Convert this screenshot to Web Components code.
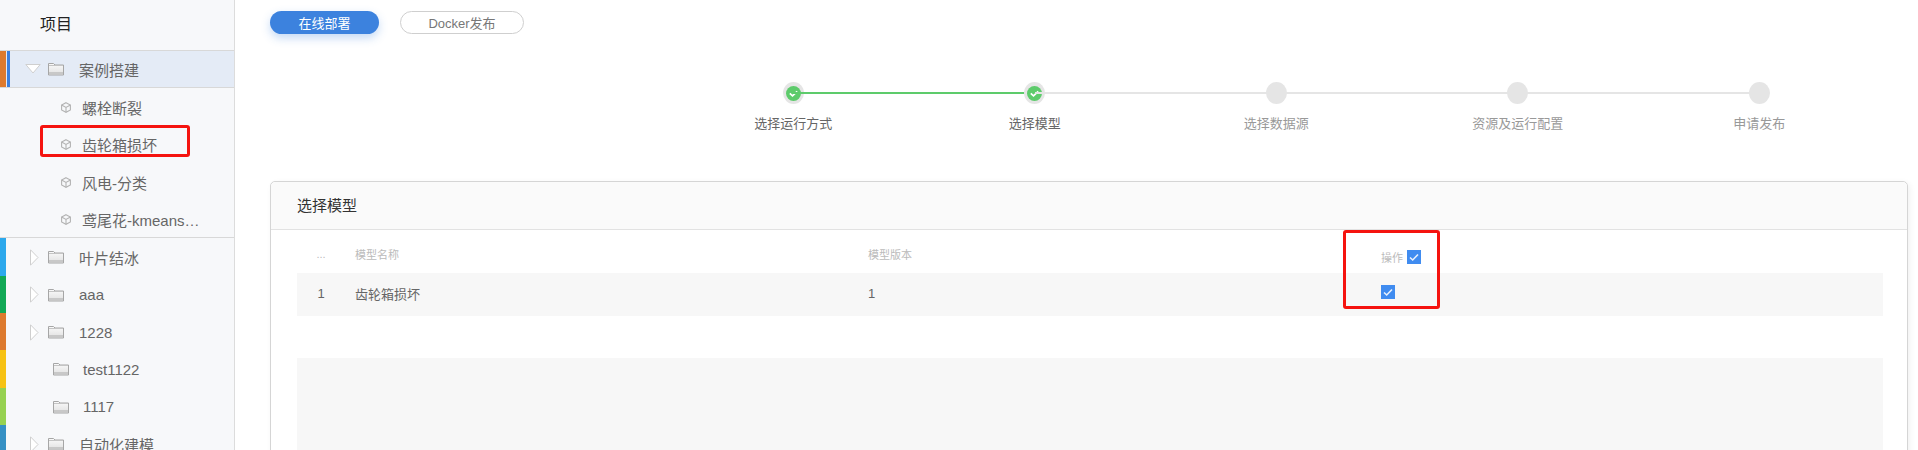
<!DOCTYPE html>
<html lang="zh">
<head>
<meta charset="utf-8">
<title>选择模型</title>
<style>
  html, body { margin: 0; height: 450px; overflow: hidden; background: #fff; }
  body { font-family: "Liberation Sans", "Noto Sans CJK SC", sans-serif; display: flex; }
</style>
</head>
<body>
<template id="folder-tpl">
  <svg width="16" height="14" viewBox="0 0 16 14"><defs><linearGradient id="fg" x1="0" y1="0" x2="0" y2="1"><stop offset="0" stop-color="#fafafa"/><stop offset="1" stop-color="#e0e0e0"/></linearGradient></defs><path d="M.5 1.500h5l1.500 1.500h8.500v10H.5z" fill="url(#fg)" stroke="#a6a6a6"/><path d="M1 10h14v2.500H1z" fill="#c8c8c8"/><path d="M1 3.500h14" stroke="#c4c4c4"/></svg>
</template>

<app-sidebar>
  <tree-row stripe="#dd7a2e" accent open active label="案例搭建"></tree-row>
  <tree-leaf label="螺栓断裂"></tree-leaf>
  <tree-leaf label="齿轮箱损坏"></tree-leaf>
  <tree-leaf label="风电-分类"></tree-leaf>
  <tree-leaf label="鸢尾花-kmeans…" last></tree-leaf>
  <tree-row stripe="#2ca8ec" label="叶片结冰"></tree-row>
  <tree-row stripe="#12a855" label="aaa"></tree-row>
  <tree-row stripe="#dd7a2e" label="1228"></tree-row>
  <tree-row stripe="#f7c213" plain label="test1122"></tree-row>
  <tree-row stripe="#96d151" plain label="1117"></tree-row>
  <tree-row stripe="#3590c4" label="自动化建模"></tree-row>
</app-sidebar>

<app-main>
  <pill-tabs></pill-tabs>
  <step-bar></step-bar>
  <model-card></model-card>
</app-main>

<script>
const FOLDER = document.getElementById('folder-tpl').innerHTML;

class AppSidebar extends HTMLElement {
  constructor() {
    super();
    this.attachShadow({ mode: 'open' });
    this.shadowRoot.innerHTML = `
      <style>
        :host { display: block; position: relative; flex: none; width: 234px; height: 450px; overflow: hidden;
          box-sizing: content-box; background: #f7f8fa; border-right: 1px solid #dcdcdc; }
        header { height: 50px; box-sizing: border-box; padding: 15px 0 0 40px; font-size: 16px; line-height: 20px; color: #222; }
        .mark { position: absolute; left: 40px; top: 125px; width: 150px; height: 32px; box-sizing: border-box;
          border: 3px solid #f5130f; border-radius: 3px; }
      </style>
      <header>项目</header>
      <slot></slot>
      <div class="mark"></div>`;
  }
}

class TreeRow extends HTMLElement {
  constructor() {
    super();
    this.attachShadow({ mode: 'open' });
  }
  connectedCallback() {
    const open = this.hasAttribute('open');
    const plain = this.hasAttribute('plain');
    const arrow = open
      ? '<svg width="16" height="10" viewBox="0 0 16 10"><path d="M.8.500h14.400L8 9z" fill="#fff" stroke="#cfcfcf"/></svg>'
      : '<svg width="9" height="17" viewBox="0 0 9 17"><path d="M.5.800v15.400L8 8.500z" fill="#fff" stroke="#cfcfcf"/></svg>';
    this.shadowRoot.innerHTML = `
      <style>
        :host { display: flex; align-items: stretch; height: 37.330px; font-size: 15px; color: #666; }
        :host([active]) { background: #e4ebf6; height: 38px; box-sizing: border-box; border-top: 1px solid #d8d8d8; border-bottom: 1px solid #d8d8d8; }
        .stripe { flex: none; width: 6px; background: ${this.getAttribute('stripe')}; }
        .accent { flex: none; width: 3px; margin-left: 1px; background: #3c7fdc; }
        .body { display: flex; align-items: center; min-width: 0; white-space: nowrap; padding-top: 1px; }
        :host([active]) .body { padding-top: 0; }
        .arrow { flex: none; display: flex; justify-content: center; width: 16px; margin-left: 20px; }
        .folder { flex: none; display: flex; }
        .folder.after { margin-left: 6px; }
        .plain { margin-left: 47px; }
        .label { margin-left: 15px; }
        .plain + .label { margin-left: 14px; }
        :host([accent]) .arrow { margin-left: 15px; }
        :host([accent]) .folder.after { margin-left: 7px; }
      </style>
      <div class="stripe"></div>
      ${this.hasAttribute('accent') ? '<div class="accent"></div>' : ''}
      <div class="body">
        ${plain ? '' : `<span class="arrow">${arrow}</span>`}
        <span class="folder ${plain ? 'plain' : 'after'}">${FOLDER}</span>
        <span class="label">${this.getAttribute('label')}</span>
      </div>`;
  }
}

class TreeLeaf extends HTMLElement {
  constructor() {
    super();
    this.attachShadow({ mode: 'open' });
  }
  connectedCallback() {
    this.shadowRoot.innerHTML = `
      <style>
        :host { display: flex; align-items: center; height: 37.330px; box-sizing: border-box; padding: 2px 0 0 61px; font-size: 15px; color: #666; white-space: nowrap; }
        :host([last]) { box-sizing: content-box; height: 35.330px; border-bottom: 1px solid #d8d8d8; }
        svg { flex: none; margin-right: 11px; }
      </style>
      <svg width="10" height="11" viewBox="0 0 10 11" fill="none" stroke="#b3b3b3" stroke-width="1.100"><path d="M5 .7 9.400 3v5L5 10.300.6 8V3z"/><path d="M.6 3 5 5.400 9.400 3M5 5.400v4.900"/></svg>
      <span>${this.getAttribute('label')}</span>`;
  }
}

class AppMain extends HTMLElement {
  constructor() {
    super();
    this.attachShadow({ mode: 'open' });
    this.shadowRoot.innerHTML = `
      <style>
        :host { display: flex; flex-direction: column; flex: 1; min-width: 0; height: 450px; box-sizing: border-box;
          padding: 11px 10px 0 35px; overflow: hidden; }
      </style>
      <slot></slot>`;
  }
}

class PillTabs extends HTMLElement {
  constructor() {
    super();
    this.attachShadow({ mode: 'open' });
    this.shadowRoot.innerHTML = `
      <style>
        :host { display: flex; gap: 21px; height: 23px; font-size: 13px; }
        span { display: flex; align-items: center; justify-content: center; height: 23px; box-sizing: border-box; border-radius: 12px; }
        .on { width: 109px; background: #3c82de; color: #fff; box-shadow: 0 4px 10px rgba(60,130,222,.3); }
        .off { width: 124px; border: 1px solid #cfcfcf; color: #777; }
      </style>
      <span class="on">在线部署</span>
      <span class="off">Docker发布</span>`;
  }
}

class StepBar extends HTMLElement {
  constructor() {
    super();
    this.attachShadow({ mode: 'open' });
    const steps = [['选择运行方式', 1], ['选择模型', 1], ['选择数据源', 0], ['资源及运行配置', 0], ['申请发布', 0]];
    const check = '<svg width="15" height="15" viewBox="0 0 15 15"><circle cx="7.500" cy="7.500" r="7.500" fill="#5dcb6b"/><path d="M3.800 7.400 6.500 9.900 11.200 5.300" fill="none" stroke="#fff" stroke-width="1.700"/></svg>';
    this.shadowRoot.innerHTML = `
      <style>
        :host { display: flex; height: 99px; margin: 48px 28px 0 auto; width: 1207.500px; flex: none; }
        .step { position: relative; flex: 1; display: flex; flex-direction: column; align-items: center; }
        .step + .step::before { content: ""; position: absolute; top: 10px; right: 50%; width: 100%; height: 2px; background: #e5e5e5; }
        .step.done + .step.done::before { background: #5dcb6b; }
        .dot { position: relative; display: flex; align-items: center; justify-content: center; width: 21px; height: 22px;
          border-radius: 50%; background: #e5e5e5; }
        label { margin-top: 12px; font-size: 13px; line-height: 16px; color: #999; white-space: nowrap; }
        .done label { color: #666; }
      </style>
      ${steps.map(([t, d]) => `<div class="step ${d ? 'done' : ''}"><div class="dot">${d ? check : ''}</div><label>${t}</label></div>`).join('')}`;
  }
}

class ModelCard extends HTMLElement {
  constructor() {
    super();
    this.attachShadow({ mode: 'open' });
    const box = '<svg width="14" height="14" viewBox="0 0 14 14"><rect width="14" height="14" fill="#408cf0"/><path d="M3 7.500 5.700 10 11 4.500" fill="none" stroke="#e8f1fd" stroke-width="1.600"/></svg>';
    this.shadowRoot.innerHTML = `
      <style>
        :host { display: flex; flex-direction: column; position: relative; flex: 1; min-height: 0; margin-bottom: -20px; box-sizing: border-box;
          border: 1px solid #d5d5d5; border-radius: 5px; box-shadow: 2px 2px 6px rgba(0,0,0,.06); background: #fff; }
        h2 { margin: 0; height: 48px; box-sizing: border-box; padding: 0 0 0 26px; font-weight: 400; font-size: 15px; line-height: 48px;
          color: #333; background: #fafafa; border-bottom: 1px solid #e2e2e2; border-radius: 5px 5px 0 0; }
        .table { flex: 1; display: flex; flex-direction: column; padding: 0 24px 0 26px; }
        .row { display: grid; grid-template-columns: 58px 513px 513px 1fr; align-items: center; }
        .head { height: 43px; font-size: 11px; color: #bbb; }
        .head span { padding-top: 4px; }
        .head .op { padding-top: 10px; }
        .item { height: 43px; font-size: 13px; color: #666; background: #f7f7f7; }
        .item span { padding-bottom: 3px; }
        .item .op { padding-bottom: 6px; }
        .idx { text-align: center; padding-right: 10px; }
        .op { display: flex; align-items: center; gap: 4px; }
        .op svg { display: block; }
        .filler { flex: 1; margin-top: 42px; background: #f7f7f7; }
        .mark { position: absolute; left: 1072px; top: 48px; width: 97px; height: 79px; box-sizing: border-box;
          border: 3px solid #f5130f; border-radius: 3px; }
      </style>
      <h2>选择模型</h2>
      <div class="table">
        <div class="row head"><span class="idx">...</span><span>模型名称</span><span>模型版本</span><span class="op">操作 ${box}</span></div>
        <div class="row item"><span class="idx">1</span><span>齿轮箱损坏</span><span>1</span><span class="op">${box}</span></div>
        <div class="filler"></div>
      </div>
      <div class="mark"></div>`;
  }
}

customElements.define('app-sidebar', AppSidebar);
customElements.define('tree-row', TreeRow);
customElements.define('tree-leaf', TreeLeaf);
customElements.define('app-main', AppMain);
customElements.define('pill-tabs', PillTabs);
customElements.define('step-bar', StepBar);
customElements.define('model-card', ModelCard);
</script>
</body>
</html>
